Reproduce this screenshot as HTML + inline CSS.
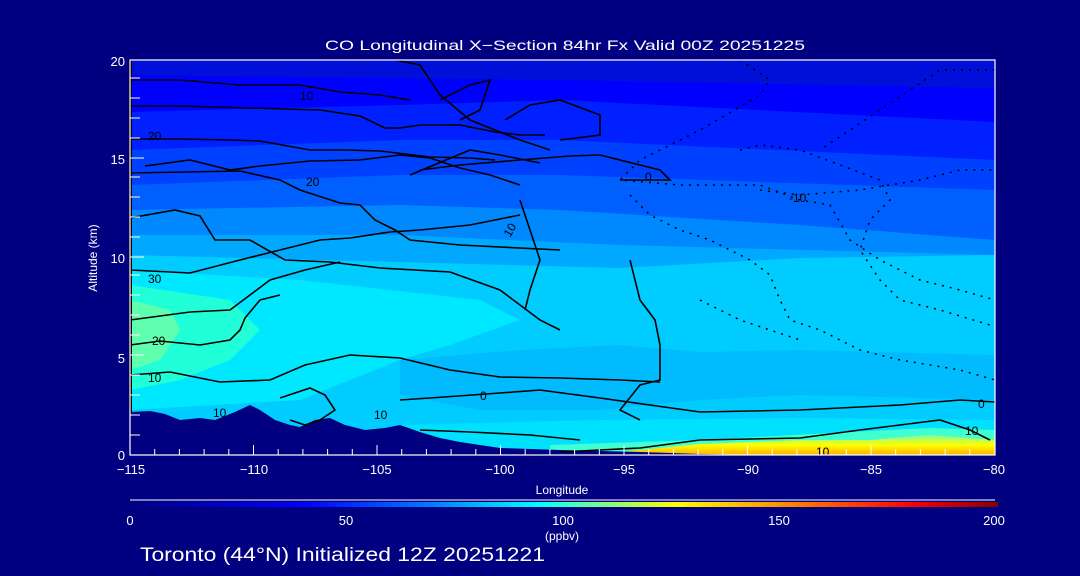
<!DOCTYPE html>
<html><head><meta charset="utf-8"><style>
html,body{margin:0;padding:0;background:#000080;}
svg{display:block}
text{font-family:"Liberation Sans",sans-serif;fill:#fff}
</style></head><body>
<svg width="1080" height="576" viewBox="0 0 1080 576" xmlns="http://www.w3.org/2000/svg">
<rect width="1080" height="576" fill="#000080"/>
<defs>
<clipPath id="pc"><rect x="130" y="60" width="865" height="395"/></clipPath>
<linearGradient id="cb" x1="0" x2="1" y1="0" y2="0">
<stop offset="0" stop-color="#000080"/>
<stop offset="0.2" stop-color="#0000ff"/>
<stop offset="0.35" stop-color="#0080ff"/>
<stop offset="0.47" stop-color="#00ffff"/>
<stop offset="0.55" stop-color="#80ff80"/>
<stop offset="0.63" stop-color="#ffff00"/>
<stop offset="0.8" stop-color="#ff6000"/>
<stop offset="0.9" stop-color="#ff0000"/>
<stop offset="1" stop-color="#800000"/>
</linearGradient>
<linearGradient id="yel" x1="0" x2="0" y1="0" y2="1">
<stop offset="0" stop-color="#80ffa0"/>
<stop offset="0.5" stop-color="#ffff00"/>
<stop offset="1" stop-color="#ffb000"/>
</linearGradient>
</defs>
<g clip-path="url(#pc)">
<rect x="130" y="60" width="865" height="395" fill="#0010d8"/>
<polygon points="130,75 560,80 995,88 995,455 130,455" fill="#0000ff"/>
<polygon points="130,112 400,105 560,100 995,122 995,455 130,455" fill="#0020ff"/>
<polygon points="130,150 400,140 560,140 995,160 995,455 130,455" fill="#0040ff"/>
<polygon points="130,185 400,175 560,175 995,190 995,455 130,455" fill="#0060ff"/>
<polygon points="130,210 400,205 560,210 800,225 995,240 995,455 130,455" fill="#0088ff"/>
<polygon points="130,235 400,235 620,245 995,255 995,455 130,455" fill="#00a8ff"/>
<polygon points="130,255 400,262 620,268 800,258 995,255 995,455 130,455" fill="#00ccff"/>
<polygon points="130,270 300,280 480,300 520,320 450,345 400,360 300,400 130,410" fill="#00e8ff"/>
<polygon points="130,285 230,300 260,330 230,360 180,380 130,390" fill="#20ffd8"/>
<polygon points="130,300 170,310 180,330 160,360 130,370" fill="#60ffb0"/>
<polygon points="400,360 520,350 620,345 700,352 800,350 995,355 995,400 800,395 700,400 600,410 480,410 400,395" fill="#00b8ff" opacity="0.8"/>
<polygon points="400,425 600,420 800,418 995,420 995,455 400,455" fill="#00e0ff"/>
<polygon points="550,445 700,440 850,432 930,428 995,430 995,455 550,455" fill="#40ffd0"/>
<polygon points="620,452 700,444 800,440 870,440 930,435 995,440 995,455 620,455" fill="url(#yel)"/>
<polygon points="130,412 150,411 165,414 180,420 200,418 215,420 235,412 250,405 260,410 275,420 290,425 300,427 315,420 330,418 345,425 365,430 385,428 400,425 420,432 440,438 460,442 500,448 560,450 640,452 700,454 760,455 995,456 130,456" fill="#000080"/>
<g fill="none" stroke="#000" stroke-width="1.6">
<polyline points="130,106 180,106 250,108 320,110 360,116 385,128 400,128 420,125 460,125 495,132 520,135 545,135"/>
<polyline points="130,139 180,139 230,140 260,141 310,150 345,150 380,151 430,157 470,158 495,160"/>
<polyline points="145,166 190,160 230,170 260,166 310,161 360,160 400,155 430,158 460,168 490,175 520,185"/>
<polyline points="130,173 240,171 280,180 300,190 340,203 360,205 375,220 395,230 410,240 460,245 560,250"/>
<polyline points="130,218 175,210 200,216 215,240 250,240 285,260 330,262 380,268 450,272 500,290 540,320 560,330"/>
<polyline points="130,270 190,273 240,260 280,250 320,240 350,238 390,232 420,230 470,225 520,215"/>
<polyline points="130,320 190,312 230,310 250,295 270,280 305,270 340,262"/>
<polyline points="130,375 170,372 220,382 270,380 305,365 350,355 400,358 450,370 500,377 560,378 620,380 660,382"/>
<polyline points="130,345 160,341 200,345 230,340 240,330 245,318 260,300 280,295"/>
<polyline points="400,400 430,398 500,393 540,390 600,398 700,412 800,410 900,405 960,400 995,402"/>
<polyline points="420,430 470,432 530,435 580,440"/>
<polyline points="560,452 640,448 700,440 800,438 860,430 900,425 940,420 970,430 990,440"/>
<polyline points="280,398 310,388 325,395 335,410 320,420 305,425 290,420"/>
<polyline points="630,260 640,300 655,320 660,345 660,380 640,385 620,410 640,420"/>
<polyline points="520,200 530,230 540,260 530,290 525,310"/>
<polyline points="440,100 470,85 490,80 480,110 460,120"/>
<polyline points="505,120 530,105 560,100 600,115 600,135 560,140"/>
<polyline points="420,170 460,165 520,160 570,156 600,155 640,165 660,170 670,180 620,180"/>
<polyline points="410,175 470,150 500,155 540,163"/>
<polyline points="395,60 420,65 440,95 470,120 520,140 550,150"/>
<polyline points="130,80 180,80 240,85 300,85 340,92 380,95 410,100"/>
</g>
<g fill="none" stroke="#000" stroke-width="1.5" stroke-dasharray="2,6">
<polyline points="740,60 770,80 760,95 700,130 660,150 640,160 620,180 680,185 760,185 800,200 830,205 850,240 880,260 920,280 960,290 995,300"/>
<polyline points="630,195 650,215 680,230 710,240 750,260 770,275 780,300 790,320 820,330 860,350 900,360 960,370 995,380"/>
<polyline points="740,150 760,145 800,150 840,165 880,180 890,200 870,220 860,250 880,280 900,300 940,310 990,325"/>
<polyline points="995,70 940,70 910,90 880,110 850,130 820,150"/>
<polyline points="760,190 800,195 860,190 920,180 960,170 995,170"/>
<polyline points="700,300 740,320 770,330 800,340"/>
</g>
<g font-size="12">
<text x="300" y="100" style="fill:#000">10</text>
<text x="148" y="140" style="fill:#000">20</text>
<text x="306" y="186" style="fill:#000">20</text>
<text x="148" y="283" style="fill:#000">30</text>
<text x="152" y="345" style="fill:#000">20</text>
<text x="148" y="382" style="fill:#000">10</text>
<text x="213" y="417" style="fill:#000">10</text>
<text x="374" y="419" style="fill:#000">10</text>
<text x="480" y="400" style="fill:#000">0</text>
<text x="645" y="181" style="fill:#000">0</text>
<text x="789" y="202" style="fill:#000">-10</text>
<text x="816" y="456" style="fill:#000">10</text>
<text x="978" y="408" style="fill:#000">0</text>
<text x="965" y="435" style="fill:#000">10</text>
<text x="505" y="235" style="fill:#000" transform="rotate(-60 510 232)">10</text>
</g>
</g>
<line x1="130.5" y1="60" x2="130.5" y2="412" stroke="#000" stroke-width="3"/>
<g stroke="#fff" stroke-width="1.2" fill="none">
<rect x="130" y="60" width="865" height="395"/>
</g>
<g stroke="#fff" stroke-width="1">
<line x1="130" y1="500" x2="995" y2="500"/>
<path d="M154.7 455v-6M179.4 455v-6M204.1 455v-6M228.8 455v-6M253.5 455v-10M278.2 455v-6M302.9 455v-6M327.6 455v-6M352.3 455v-6M377 455v-10M401.7 455v-6M426.4 455v-6M451.1 455v-6M475.8 455v-6M500.5 455v-10M525.2 455v-6M549.9 455v-6M574.6 455v-6M599.3 455v-6M624 455v-10M648.7 455v-6M673.4 455v-6M698.1 455v-6M722.8 455v-6M747.5 455v-10M772.2 455v-6M796.9 455v-6M821.6 455v-6M846.3 455v-6M871 455v-10M895.7 455v-6M920.4 455v-6M945.1 455v-6M969.8 455v-6"/>
<path d="M130 435h10M130 415h10M130 395h10M130 375h10M130 355h14M130 335h10M130 315h10M130 295h10M130 275h10M130 257h14M130 237h10M130 217h10M130 197h10M130 177h10M130 158h14M130 138h10M130 118h10M130 98h10M130 78h10"/>
</g>
<rect x="130" y="502" width="868" height="5" fill="url(#cb)"/>
<text x="325" y="50" font-size="14" textLength="480" lengthAdjust="spacingAndGlyphs">CO Longitudinal X−Section 84hr  Fx Valid 00Z 20251225</text>
<g font-size="13" text-anchor="end">
<text x="125" y="66">20</text>
<text x="125" y="164">15</text>
<text x="125" y="263">10</text>
<text x="125" y="363">5</text>
<text x="125" y="460">0</text>
</g>
<g font-size="13" text-anchor="middle">
<text x="131" y="474">−115</text>
<text x="254" y="474">−110</text>
<text x="377" y="474">−105</text>
<text x="500" y="474">−100</text>
<text x="624" y="474">−95</text>
<text x="748" y="474">−90</text>
<text x="871" y="474">−85</text>
<text x="994" y="474">−80</text>
<text x="130" y="525">0</text>
<text x="346" y="525">50</text>
<text x="563" y="525">100</text>
<text x="779" y="525">150</text>
<text x="994" y="525">200</text>
</g>
<text x="562" y="494" font-size="12" text-anchor="middle">Longitude</text>
<text x="562" y="540" font-size="12" text-anchor="middle">(ppbv)</text>
<text x="97" y="258" font-size="12" text-anchor="middle" transform="rotate(-90 97 258)">Altitude (km)</text>
<text x="140" y="561" font-size="19" textLength="405" lengthAdjust="spacingAndGlyphs">Toronto (44°N) Initialized 12Z 20251221</text>
</svg>
</body></html>
